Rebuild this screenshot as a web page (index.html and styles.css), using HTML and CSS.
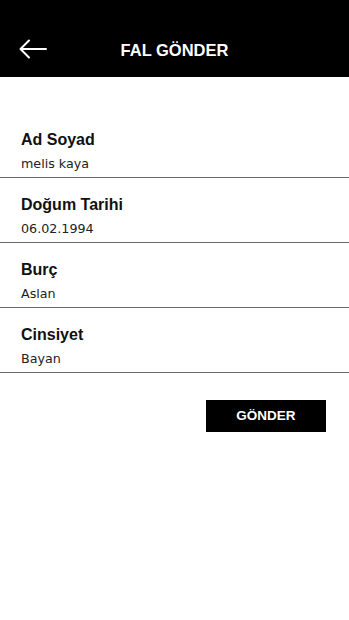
FILE: index.html
```html
<!DOCTYPE html>
<html lang="tr">

<head>
    <meta charset="UTF-8">
    <meta name="viewport" content="width=device-width, initial-scale=1.0">
    <title>Fal Gönder</title>
    <link rel="stylesheet" href="styles.css">
</head>

<body>

    <div class="top-bar">
        <a href="#" class="btn-back">
            <svg width="28" height="20" viewBox="0 0 28 20">
                <path d="M27 10 H2 M10 1.5 L1.5 10 L10 18.5" fill="none" stroke="#fff" stroke-width="2" stroke-linecap="round" stroke-linejoin="round"/>
            </svg>
        </a>
        <h1 class="top-title">FAL GÖNDER</h1>
    </div>

    <div class="form">
        <div class="field">
            <h4 class="field-label">Ad Soyad</h4>
            <p class="field-value">melis kaya</p>
        </div>
        <div class="field">
            <h4 class="field-label">Doğum Tarihi</h4>
            <p class="field-value">06.02.1994</p>
        </div>
        <div class="field">
            <h4 class="field-label">Burç</h4>
            <p class="field-value">Aslan</p>
        </div>
        <div class="field">
            <h4 class="field-label">Cinsiyet</h4>
            <p class="field-value">Bayan</p>
        </div>
    </div>

    <div class="send-row">
        <a href="javascript:;" class="btn-send">GÖNDER</a>
    </div>

</body>

</html>
```

FILE: styles.css
```css
body,
div,
p,
h1,
h4,
a {
    padding: 0px;
    margin: 0px;
}

body {
    background-color: #fff;
    font-family: "Liberation Sans", Arial, sans-serif;
    color: #000;
}

.top-bar {
    position: relative;
    height: 57px;
    padding-top: 20px;
    background-color: #000;
    display: flex;
    align-items: center;
    justify-content: center;
}

.top-bar .btn-back {
    position: absolute;
    left: 19px;
    top: 39px;
    display: block;
    width: 28px;
    height: 20px;
}

.top-title {
    margin-top: 3px;
    color: #fff;
    font-size: 16.5px;
    font-weight: bold;
    line-height: 20px;
}

.form {
    padding-top: 36px;
}

.field {
    padding: 18px 21px 0;
    box-sizing: border-box;
    height: 65px;
    border-bottom: 1px solid #6a6a6a;
}

.field-label {
    font-size: 16px;
    font-weight: bold;
    line-height: 18px;
    color: #111;
}

.field-value {
    margin-top: 6px;
    font-family: "DejaVu Sans", Verdana, sans-serif;
    font-size: 12.7px;
    line-height: 18px;
    color: #222;
}

.send-row {
    display: flex;
    justify-content: flex-end;
    padding: 27px 23px 0 0;
}

.btn-send {
    display: block;
    width: 120px;
    height: 32px;
    line-height: 32px;
    text-align: center;
    background-color: #000;
    color: #fff;
    font-size: 13.5px;
    font-weight: bold;
    text-decoration: none;
}
```
